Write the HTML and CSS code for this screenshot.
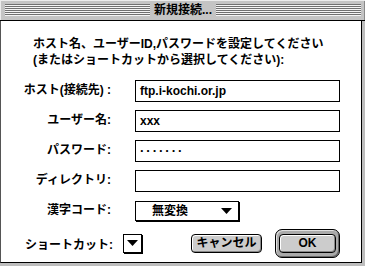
FILE: index.html
```html
<!DOCTYPE html>
<html lang="ja">
<head>
<meta charset="utf-8">
<title>新規接続...</title>
<link rel="stylesheet" href="styles.css">
</head>
<body>
<div class="window">
  <div class="titlebar">
    <div class="stripes"></div>
    <div class="title">新規接続...</div>
    <div class="stripes"></div>
  </div>
  <div class="frame">
    <div class="content">
      <p class="intro">ホスト名、ユーザーID,パスワードを設定してください<br>(またはショートカットから選択してください):</p>
      <div class="form">
        <label class="label">ホスト(接続先) :</label>
        <div class="field">ftp.i-kochi.or.jp</div>
        <label class="label">ユーザー名:</label>
        <div class="field">xxx</div>
        <label class="label">パスワード:</label>
        <div class="field dots">·······</div>
        <label class="label">ディレクトリ:</label>
        <div class="field"></div>
        <label class="label">漢字コード:</label>
        <div class="popup"><span class="popup-text">無変換</span><svg class="tri" width="11" height="6" viewBox="0 0 11 6"><path d="M0 0H11L5.5 6Z"/></svg></div>
      </div>
      <div class="footer">
        <span class="foot-label">ショートカット:</span>
        <div class="popup small"><svg class="tri" width="11" height="6" viewBox="0 0 11 6"><path d="M0 0H11L5.5 6Z"/></svg></div>
        <div class="btn cancel">キャンセル</div>
        <div class="ok-ring"><div class="btn ok">OK</div></div>
      </div>
    </div>
  </div>
</div>
</body>
</html>
```
FILE: styles.css
```css
html, body {
  margin: 0;
  padding: 0;
}
body {
  background: #ffffff;
  font-family: "Liberation Sans", "Noto Sans CJK JP", sans-serif;
  font-weight: bold;
  font-size: 12px;
  color: #000;
}
.window {
  width: 365px;
  height: 266px;
  background: #bdbdbd;
  display: flex;
  flex-direction: column;
}
.titlebar {
  height: 20px;
  border-bottom: 1px solid #000;
  background: #c4c4c4;
  box-shadow: inset 1px 1px 0 #ececec, inset -1px 0 0 #8a8a8a;
  display: flex;
  align-items: center;
  padding: 0 4px 0 5px;
  gap: 4px;
}
.stripes {
  flex: 1;
  height: 12px;
  background: repeating-linear-gradient(to bottom, #707070 0 1px, #f4f4f4 1px 2px);
}
.title {
  line-height: 20px;
  font-size: 12px;
  white-space: nowrap;
}
.frame {
  flex: 1;
  display: flex;
  padding: 0 3px 3px 0;
}
.content {
  flex: 1;
  background: #fff;
  border-left: 1px solid #555;
  border-right: 1px solid #000;
  border-bottom: 1px solid #000;
  display: flex;
  flex-direction: column;
}
.intro {
  margin: 15px 0 0 32px;
  line-height: 16px;
  white-space: nowrap;
}
.form {
  margin-top: 12px;
  display: grid;
  grid-template-columns: 110px 205px;
  grid-auto-rows: 22px;
  column-gap: 24px;
  row-gap: 8px;
  align-items: center;
}
.label {
  text-align: right;
  white-space: nowrap;
  line-height: 16px;
  margin-top: -2px;
}
.field {
  height: 22px;
  box-sizing: border-box;
  border: 1px solid #000;
  padding-left: 4px;
  line-height: 20px;
}
.dots {
  letter-spacing: 2px;
  font-size: 13px;
}
.popup {
  display: flex;
  align-items: center;
  box-sizing: border-box;
  width: 104px;
  height: 20px;
  border: 1px solid #000;
  box-shadow: 1px 1px 0 #000;
  background: #fff;
  justify-self: start;
}
.popup-text {
  padding-left: 16px;
  line-height: 18px;
}
.popup .tri {
  margin-left: auto;
  margin-right: 6px;
}
.popup.small {
  width: 19px;
  height: 19px;
  justify-content: center;
  margin-left: 10px;
}
.popup.small .tri {
  margin: 0;
}
.footer {
  margin-top: 6px;
  height: 30px;
  display: flex;
  align-items: center;
  padding-left: 24px;
}
.foot-label {
  white-space: nowrap;
}
.btn {
  box-sizing: border-box;
  border: 1px solid #000;
  border-radius: 4px;
  background: #cccccc;
  box-shadow: inset 1px 1px 0 #fff, inset -1px -1px 0 #888;
  display: flex;
  align-items: center;
  justify-content: center;
  line-height: 16px;
}
.cancel {
  width: 71px;
  height: 19px;
  margin-left: 49px;
}
.ok-ring {
  margin-left: 13px;
  box-sizing: border-box;
  width: 65px;
  height: 29px;
  border: 1px solid #000;
  border-radius: 7px;
  background: #aaaaaa;
  box-shadow: inset 1px 1px 0 #e0e0e0, inset -1px -1px 0 #666;
  padding: 4px 3px;
  display: flex;
}
.ok {
  flex: 1;
  height: 19px;
}
```
